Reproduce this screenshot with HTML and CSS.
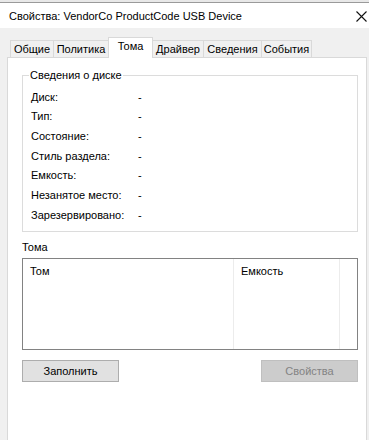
FILE: index.html
```html
<!DOCTYPE html>
<html lang="ru">
<head>
    <meta charset="UTF-8">
    <meta name="viewport" content="width=device-width, initial-scale=1.0">
    <title>Свойства: VendorCo ProductCode USB Device</title>
    <link rel="stylesheet" href="styles.css">
</head>
<body>
    <div class="behind"></div>

    <div class="titlebar">
        <span class="title">Свойства: VendorCo ProductCode USB Device</span>
        <svg class="close" width="11" height="11" viewBox="0 0 11 11">
            <path d="M0.5 0.5 L10.5 10.5 M10.5 0.5 L0.5 10.5" stroke="#111" stroke-width="1.1" fill="none"/>
        </svg>
    </div>

    <div class="dialog">
        <div class="tabs">
            <div class="tab">Общие</div>
            <div class="tab">Политика</div>
            <div class="tab active">Тома</div>
            <div class="tab">Драйвер</div>
            <div class="tab">Сведения</div>
            <div class="tab">События</div>
        </div>

        <div class="panel">
            <!-- Disk info -->
            <fieldset class="group">
                <legend>Сведения о диске</legend>
                <div class="info-row"><span class="info-label">Диск:</span><span>-</span></div>
                <div class="info-row"><span class="info-label">Тип:</span><span>-</span></div>
                <div class="info-row"><span class="info-label">Состояние:</span><span>-</span></div>
                <div class="info-row"><span class="info-label">Стиль раздела:</span><span>-</span></div>
                <div class="info-row"><span class="info-label">Емкость:</span><span>-</span></div>
                <div class="info-row"><span class="info-label">Незанятое место:</span><span>-</span></div>
                <div class="info-row"><span class="info-label">Зарезервировано:</span><span>-</span></div>
            </fieldset>

            <!-- Volumes list -->
            <div class="list-caption">Тома</div>
            <div class="listview">
                <div class="col col-name"><div class="col-head">Том</div></div>
                <div class="col col-size"><div class="col-head">Емкость</div></div>
                <div class="col col-fill"></div>
            </div>

            <div class="buttons">
                <button class="btn">Заполнить</button>
                <button class="btn" disabled>Свойства</button>
            </div>
        </div>
    </div>
</body>
</html>
```

FILE: styles.css
```css
body {
    margin: 0;
    background: #f0f0f0;
    font-family: "Segoe UI", "Liberation Sans", Arial, sans-serif;
    font-size: 11px;
    color: #000;
    height: 440px;
    overflow: hidden;
    display: flex;
    flex-direction: column;
}
.behind {
    height: 2px;
    background: #e8e8e8;
    border-bottom: 1px solid #9a9a9a;
}
.titlebar {
    height: 25px;
    background: #fff;
    display: flex;
    align-items: center;
    justify-content: space-between;
    padding: 0 2px 0 9px;
}
.title { line-height: 16px; }
.close { margin-top: 1px; }

.dialog {
    flex: 1;
    display: flex;
    flex-direction: column;
    padding: 9px 2px 0 7px;
}
.tabs {
    display: flex;
    align-items: flex-end;
    padding-left: 3px;
    height: 20px;
}
.tab {
    box-sizing: border-box;
    height: 17px;
    line-height: 16px;
    text-align: center;
    white-space: nowrap;
    border: 1px solid #d9d9d9;
    border-bottom: none;
    margin-right: -1px;
    background: #f0f0f0;
}
.tab:nth-child(1) { width: 44px; }
.tab:nth-child(2) { width: 56px; }
.tab:nth-child(3) { width: 45px; }
.tab:nth-child(4) { width: 52px; }
.tab:nth-child(5) { width: 59px; }
.tab:nth-child(6) { width: 51px; }
.tab.active {
    height: 21px;
    line-height: 17px;
    background: #fff;
    position: relative;
    z-index: 1;
    margin-bottom: -1px;
}
.panel {
    flex: 1;
    background: #fff;
    border: 1px solid #d9d9d9;
    border-bottom: none;
    padding: 9px 8px 0 14px;
}

.group {
    margin: 0;
    border: 1px solid #dcdcdc;
    padding: 4px 0 6px 8px;
}
.group legend {
    padding: 0 1px;
    margin-left: -2px;
    line-height: 16px;
}
.info-row {
    display: flex;
    height: 19.67px;
    align-items: center;
}
.info-label { width: 107px; }

.list-caption {
    margin-top: 7px;
    line-height: 16px;
}
.listview {
    margin-top: 3px;
    height: 90px;
    border: 1px solid #828282;
    display: flex;
}
.col { height: 100%; }
.col-name { width: 210px; border-right: 1px solid #ececec; }
.col-size { width: 105px; border-right: 1px solid #ececec; }
.col-fill { flex: 1; }
.col-head {
    line-height: 16px;
    padding: 4px 0 0 7px;
}

.buttons {
    display: flex;
    justify-content: space-between;
    margin-top: 10px;
}
.btn {
    width: 97px;
    height: 22px;
    font: inherit;
    color: #000;
    background: #e1e1e1;
    border: 1px solid #adadad;
    padding: 0;
}
.btn:disabled {
    background: #cccccc;
    border-color: #bfbfbf;
    color: #838383;
}
```
